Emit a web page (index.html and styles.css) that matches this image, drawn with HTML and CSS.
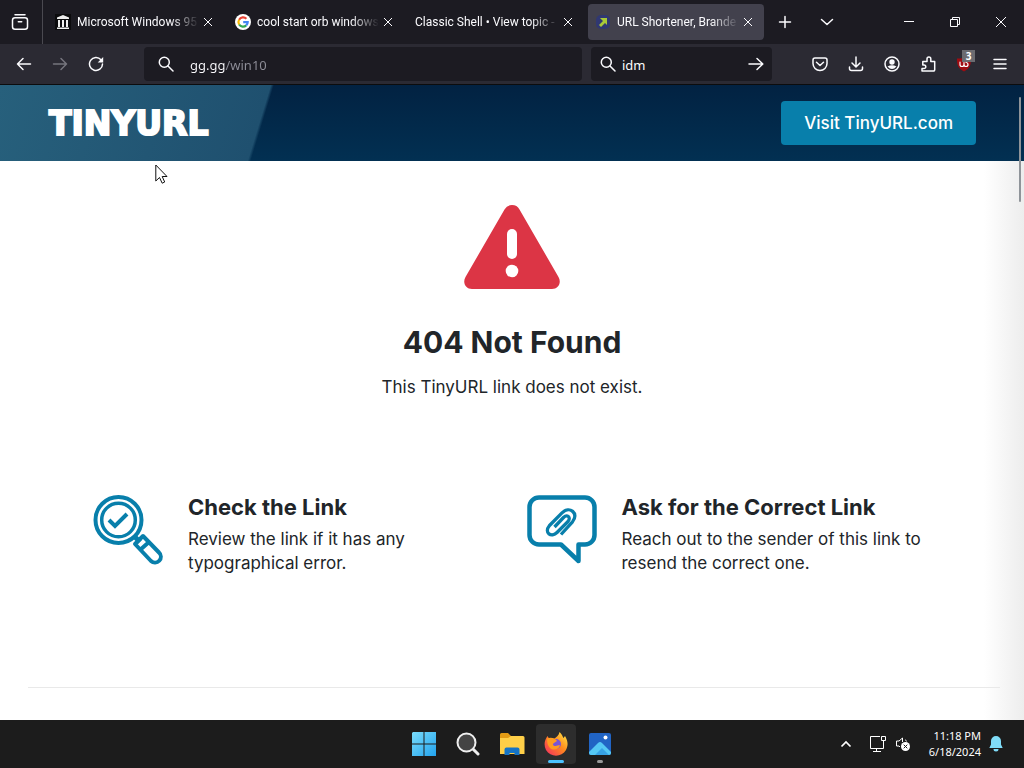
FILE: index.html
```html
<!DOCTYPE html>
<html lang="en">
<head>
<meta charset="utf-8">
<meta name="viewport" content="width=device-width, initial-scale=1">
<title>URL Shortener, Branded Short Links</title>
<link rel="stylesheet" href="styles.css">
</head>
<body>
<div class="desktop">
  <header class="browser">
    <div class="tab-strip">
      <button class="view-button" type="button" aria-label="Firefox View">
        <svg width="18" height="18" viewBox="0 0 18 18" fill="none" stroke="#fbfbfe" stroke-width="1.5" stroke-linecap="round"><path d="M4 1.8h10"/><rect x="1.5" y="4.8" width="15" height="11.5" rx="2.5"/><path d="M7.3 8.8h3.4"/></svg>
      </button>
      <nav class="tabs" aria-label="Tabs">
        <div class="tab">
          <a class="tab-link" href="#">
            <svg width="16" height="16" viewBox="0 0 16 16"><path fill="#0b0b0d" d="M0 0h16v16H0z"/><path fill="#eee" d="M2 3.5 8 1l6 2.500V5H2zM3 6h2v7H3zM7 6h2v7H7zM11 6h2v7h-2zM2 13.500h12V15H2z"/></svg>
            <span class="tab-title">Microsoft Windows 95</span>
          </a>
          <button class="close" type="button" aria-label="Close tab"><svg width="10" height="10" viewBox="0 0 10 10"><path d="m1 1 8 8M9 1 1 9"/></svg></button>
        </div>
        <div class="tab">
          <a class="tab-link" href="#">
            <svg width="16" height="16" viewBox="0 0 16 16"><circle cx="8" cy="8" r="8" fill="#fff"/><g fill="none" stroke-width="2.200"><path stroke="#ea4335" d="M4.100 5.700A4.700 4.700 0 0 1 11.400 4.700"/><path stroke="#fbbc05" d="M4.100 10.500a4.700 4.700 0 0 1 0-4.800"/><path stroke="#34a853" d="M11.200 11.400a4.700 4.700 0 0 1-7.100-.9"/><path stroke="#4285f4" d="M8.200 8.100h4.500a4.700 4.700 0 0 1-1.500 3.300"/></g></svg>
            <span class="tab-title">cool start orb windows</span>
          </a>
          <button class="close" type="button" aria-label="Close tab"><svg width="10" height="10" viewBox="0 0 10 10"><path d="m1 1 8 8M9 1 1 9"/></svg></button>
        </div>
        <div class="tab">
          <a class="tab-link" href="#"><span class="tab-title">Classic Shell • View topic -</span></a>
          <button class="close" type="button" aria-label="Close tab"><svg width="10" height="10" viewBox="0 0 10 10"><path d="m1 1 8 8M9 1 1 9"/></svg></button>
        </div>
        <div class="tab tab-active">
          <a class="tab-link" href="#" aria-current="page">
            <svg width="16" height="16" viewBox="0 0 16 16"><rect x="1" y="1" width="14" height="14" rx="5" fill="#303872"/><path fill="#a9c938" d="M5 4h7v7l-2-2-4 4-2-2 4-4z"/></svg>
            <span class="tab-title">URL Shortener, Brande</span>
          </a>
          <button class="close" type="button" aria-label="Close tab"><svg width="10" height="10" viewBox="0 0 10 10"><path d="m1 1 8 8M9 1 1 9"/></svg></button>
        </div>
      </nav>
      <button class="tool" type="button" aria-label="New tab"><svg width="14" height="14" viewBox="0 0 14 14"><path d="M7 1.500v11M1.500 7h11"/></svg></button>
      <button class="tool" type="button" aria-label="List all tabs"><svg width="14" height="14" viewBox="0 0 14 14"><path d="m1.500 4.500 5.500 5 5.500-5"/></svg></button>
      <div class="window-controls">
        <button type="button" aria-label="Minimize"><svg width="12" height="12" viewBox="0 0 12 12"><path d="M1 5.500h10"/></svg></button>
        <button type="button" aria-label="Restore"><svg width="12" height="12" viewBox="0 0 12 12"><path d="M1.500 3.500h7v7h-7zM3.500 3.500v-2h7v7h-2"/></svg></button>
        <button type="button" aria-label="Close"><svg width="12" height="12" viewBox="0 0 12 12"><path d="m1 1 10 10M11 1 1 11"/></svg></button>
      </div>
    </div>
    <div class="toolbar">
      <div class="nav-tools">
        <button class="tool" type="button" aria-label="Back"><svg width="16" height="16" viewBox="0 0 16 16"><path d="M14.500 8h-13M7 2.500 1.500 8 7 13.500"/></svg></button>
        <button class="tool" type="button" aria-label="Forward" disabled><svg width="16" height="16" viewBox="0 0 16 16"><path d="M1.500 8h13M9 2.500 14.500 8 9 13.500"/></svg></button>
        <button class="tool" type="button" aria-label="Reload"><svg width="16" height="16" viewBox="0 0 16 16"><path d="M13 3.800A6.500 6.500 0 1 0 14.500 8"/><path fill="currentColor" stroke="none" d="M15.200 1v5.500H9.700z"/></svg></button>
      </div>
      <label class="field address">
        <svg width="16" height="16" viewBox="0 0 16 16"><circle cx="6.300" cy="6.300" r="5"/><path d="m10 10 5 5"/></svg>
        <input class="address-input" type="text" value="gg.gg/win10" aria-label="Address">
      </label>
      <div class="field search">
        <svg width="16" height="16" viewBox="0 0 16 16"><circle cx="6.300" cy="6.300" r="5"/><path d="m10 10 5 5"/></svg>
        <input type="text" value="idm" aria-label="Search">
        <button class="go" type="button" aria-label="Go"><svg width="16" height="16" viewBox="0 0 16 16"><path d="M1 8h13.500M9 2.500 14.800 8 9 13.500"/></svg></button>
      </div>
      <div class="extras">
        <button class="tool" type="button" aria-label="Pocket"><svg width="16" height="16" viewBox="0 0 16 16"><path d="M3 2h10a2 2 0 0 1 2 2v3.500a7 7 0 0 1-14 0V4a2 2 0 0 1 2-2zM4.500 6.200 8 9.500l3.500-3.300"/></svg></button>
        <button class="tool" type="button" aria-label="Downloads"><svg width="16" height="16" viewBox="0 0 16 16"><path d="M8 1v9.500M4 7l4 4 4-4M1.500 11v1.500A2 2 0 0 0 3.500 14.500h9a2 2 0 0 0 2-2V11"/></svg></button>
        <button class="tool" type="button" aria-label="Account"><svg width="16" height="16" viewBox="0 0 16 16"><circle cx="8" cy="8" r="7"/><circle cx="8" cy="6" r="2.700" fill="currentColor" stroke="none"/><path fill="currentColor" stroke="none" d="M3.500 10.500Q8 8 12.500 10.500 8 15.500 3.500 10.500z"/></svg></button>
        <button class="tool" type="button" aria-label="Extensions"><svg width="16" height="16" viewBox="0 0 16 16"><path d="M2 15h11.500a1.200 1.200 0 0 0 1.200-1.200V5.500h-3.900V3a1.900 1.900 0 0 0-3.800 0v2.500H2.800V9H4a1.800 1.800 0 0 1 0 3.600H2z"/></svg></button>
        <button class="tool" type="button" aria-label="uBlock Origin, 3 blocked"><svg width="16" height="16" viewBox="0 0 16 16"><path fill="#a00c12" stroke="none" d="M8 1c3 2 5 1.500 7 1.500 0 7-1 9.500-7 13C2 12 1 9.500 1 2.500 4 2.500 5 3 8 1z"/><path stroke="#fff" stroke-width="1.200" d="M4 6v2.500a2 2 0 0 0 4 0V6.500v2a2 2 0 0 0 4 0 2 2 0 0 0-2-2"/></svg><span class="badge">3</span></button>
        <button class="tool" type="button" aria-label="Menu"><svg width="16" height="16" viewBox="0 0 16 16"><path d="M2 3.500h12M2 8h12M2 12.500h12"/></svg></button>
      </div>
    </div>
  </header>

  <div class="page">
    <header class="site-header">
      <a class="brand" href="#">TINYURL</a>
      <a class="visit" href="#">Visit TinyURL.com</a>
    </header>
    <main class="content">
      <section class="notice">
        <svg width="96" height="84" viewBox="0 0 96 84"><path fill="#dc3545" d="M40.500 4.500a8.600 8.600 0 0 1 15 0l39 67.500c3.300 5.700-.2 12-6.500 12H8c-6.300 0-9.800-6.300-6.500-12z"/><path stroke="#fff" stroke-width="10" stroke-linecap="round" d="M48 29v20"/><circle cx="48" cy="66" r="6.300" fill="#fff"/></svg>
        <h1>404 Not Found</h1>
        <p>This TinyURL link does not exist.</p>
      </section>
      <section class="tips">
        <article class="tip">
          <svg width="70" height="70" viewBox="0 0 70 70" fill="none" stroke="#087fab" stroke-width="4"><circle cx="25.500" cy="25" r="23"/><circle cx="25.500" cy="25" r="16.800" stroke-width="3.500"/><path d="m16 25 6 6 12-12"/><path stroke-width="5" d="m41 41 6 6"/><path stroke-linejoin="round" d="m42 49 8-8 16 16.500a5.500 5.500 0 0 1-8 8.500zM47 55l9-8"/></svg>
          <div><h2>Check the Link</h2><p>Review the link if it has any typographical error.</p></div>
        </article>
        <article class="tip">
          <svg width="70" height="70" viewBox="0 0 70 70" fill="none" stroke="#087fab" stroke-width="4.500" stroke-linejoin="round"><path d="M12 2.500h46a9.500 9.500 0 0 1 9.500 9.500v28a9.500 9.500 0 0 1-9.500 9.500h-6.500V66L34 49.500H12A9.500 9.500 0 0 1 2.500 40V12A9.500 9.500 0 0 1 12 2.500z"/><path stroke-width="3.300" d="m34 39.500 11.500-12.700c7-8.300-3-16.500-10.500-9L22.500 30.500c-6 7.500 2 12.500 7.500 7L41 26.500c3.500-4.500-1-7.500-4.500-4L27.500 32"/></svg>
          <div><h2>Ask for the Correct Link</h2><p>Reach out to the sender of this link to resend the correct one.</p></div>
        </article>
      </section>
      <hr class="divider">
    </main>
    <div class="scroll-thumb"></div>
    <svg class="pointer" width="13" height="20" viewBox="0 0 13 20"><path fill="#fff" stroke="#111" d="M.8 1v16l3.700-3.500 2.700 5.700 2.500-1.200L7.200 12.500H12z"/></svg>
  </div>

  <footer class="taskbar">
    <div class="apps">
      <button type="button" aria-label="Start"><svg width="24" height="24" viewBox="0 0 24 24"><defs><linearGradient id="win" x2="1" y2="1"><stop stop-color="#79dcfb"/><stop offset="1" stop-color="#22a3ee"/></linearGradient></defs><path fill="url(#win)" d="M1 0h10.500v11.500H0V1zM12.500 0H24v11.500H12.500zM0 12.500h11.500V24H0zM12.500 12.500H24V24H12.500z"/></svg></button>
      <button type="button" aria-label="Search"><svg width="24" height="24" viewBox="0 0 24 24"><path stroke="#eee" stroke-width="3" stroke-linecap="round" d="m17 17 5 5"/><circle cx="10.500" cy="10.500" r="9" fill="#444" stroke="#eee" stroke-width="2"/></svg></button>
      <button type="button" aria-label="File Explorer"><svg width="26" height="24" viewBox="0 0 26 24"><path fill="#e39b14" d="M1 2.500A1.500 1.500 0 0 1 2.500 1H9l3 3v5H1z"/><path fill="#ffcf48" d="M1 6h8l3-2h12a1.500 1.500 0 0 1 1.500 1.500V22H1z"/><path fill="#1674c5" d="M5.500 23v-5.500a2 2 0 0 1 2-2h11a2 2 0 0 1 2 2V23h-5v-2h-5v2z"/></svg></button>
      <button class="app-active" type="button" aria-label="Firefox"><svg width="24" height="24" viewBox="0 0 24 24"><defs><linearGradient id="fox" x1="1" x2="0" y2="1"><stop stop-color="#fff04a"/><stop offset=".45" stop-color="#ff8a1d"/><stop offset="1" stop-color="#f52667"/></linearGradient></defs><path fill="url(#fox)" d="M15.500 0c3 3 3 4.500 4 6l1.500-2c3.500 6 3 10 1 14-4.500 7.500-15.500 7.500-20 0C-.5 13 .5 8 3.500 4l1.500 2.500c1.800-.8 3.500-.5 5 .3C12.500 5 15 3.500 15.500 0z"/><circle cx="12" cy="12" r="5" fill="#7955d5"/><path fill="#ff9b20" d="M3 6.500c5-2 8.500.5 10 2.500l-3 2c-2 1-1 3 1.500 3 2 0 3-1 4.500-.5-1 4-7 5.500-10 2.500-2.500-2.500-3-6-3-9.500z"/></svg><span class="indicator"></span></button>
      <button type="button" aria-label="Photos"><svg width="24" height="24" viewBox="0 0 24 24"><rect x="1" y="1" width="22" height="22" rx="2" fill="#2164c4"/><path fill="#55c8f4" d="M1 20 10 11q2-2 4 0l9 9v1a2 2 0 0 1-2 2H3a2 2 0 0 1-2-2z"/><path fill="#37a2e4" d="m7 23 7-7 7 7z"/><circle cx="17.500" cy="5.500" r="2" fill="#fff"/></svg><span class="indicator indicator-small"></span></button>
    </div>
    <div class="tray">
      <button type="button" aria-label="Show hidden icons"><svg width="12" height="12" viewBox="0 0 12 12"><path stroke-width="1.700" d="m1.500 8.500 4.500-4.500 4.500 4.500"/></svg></button>
      <button class="status" type="button" aria-label="Network and sound">
        <svg width="18" height="18" viewBox="0 0 18 18"><path d="M11 1.500H1.500v12h13V10M7.500 13.500v3M4 16.500h8M12.500 1.500h4v4h-4zM14.500 5.500V10"/></svg>
        <svg width="16" height="16" viewBox="0 0 16 16"><path d="M7.500 6V2L4 5H1.500v5H4l1 1M10 3.500c1 .8 1.400 1.500 1.500 2"/><circle cx="10.500" cy="10.500" r="4.500" fill="#fff" stroke="none"/><path stroke="#1c1c1c" d="m8.700 8.700 3.600 3.600M12.300 8.700l-3.600 3.600"/></svg>
      </button>
      <time class="clock" datetime="2024-06-18T23:18">11:18 PM<br>6/18/2024</time>
      <button type="button" aria-label="Notifications"><svg width="16" height="16" viewBox="0 0 16 16"><path fill="#80dcf8" stroke="none" d="M8 0a5 5 0 0 1 5 5v3.500l1.700 3.500H1.300L3 8.500V5a5 5 0 0 1 5-5zM5.500 13h5a2.500 2.500 0 0 1-5 0z"/></svg></button>
    </div>
  </footer>
</div>
</body>
</html>
```

FILE: styles.css
```css
* { box-sizing: border-box; }

body { margin: 0; font-family: "Noto Sans", sans-serif; }

button { margin: 0; padding: 0; border: 0; background: none; color: inherit; font: inherit; }

button, .tab-link, .field { display: flex; align-items: center; }

button { justify-content: center; }

svg { display: block; flex: none; }

h1, h2, p { margin: 0; }

.desktop { display: flex; flex-direction: column; min-height: 100vh; }

/* Browser chrome */

.browser { color: #fbfbfe; background: #2b2a33; border-bottom: 1px solid #0c0c0d; }

.tab-strip { display: flex; height: 44px; background: #1c1b22; }

.view-button { width: 43px; padding-right: 3px; border-right: 1px solid #4a4950; }

.tabs { display: flex; flex: 0 1 716px; gap: 4px; margin-left: 5px; padding: 4px 0; min-width: 0; }

.tab { display: flex; flex: 1 1 0; align-items: center; min-width: 0; padding: 0 11px 0 7px; border-radius: 4px; }

.tab-active { background: #42414d; }

.tab-link { flex: 1; gap: 6px; min-width: 0; color: inherit; font-family: Roboto, sans-serif; font-size: 12px; text-decoration: none; }

.tab-title { flex: 1; overflow: hidden; white-space: nowrap; mask-image: linear-gradient(to left, transparent, #000 28px); }

.close { width: 10px; height: 24px; margin-left: 4px; }

.close svg, .tool svg, .field svg, .window-controls svg, .tray svg { fill: none; stroke: currentColor; }

.tool svg, .field svg { stroke-width: 1.5; stroke-linecap: round; stroke-linejoin: round; }

.tool { position: relative; width: 36px; height: 40px; }

.tool:disabled { color: #76757e; }

.tab-strip .tool { width: 42px; height: 44px; }

.window-controls { display: flex; margin-left: auto; }

.window-controls button { width: 46px; }

.toolbar { display: flex; align-items: center; height: 40px; padding: 0 6px; }

.nav-tools, .extras { display: flex; }

.field { height: 34px; border-radius: 4px; background: #1c1b22; }

.field input { flex: 1; min-width: 0; height: 30px; padding: 2px 0 0; border: 0; outline: 0; background: none; color: #fbfbfe; font: 13px "Noto Sans", sans-serif; }

.address { flex: 1; gap: 16px; margin-left: 30px; padding-left: 14px; }

.field .address-input { color: transparent; background: linear-gradient(to right, #fbfbfe 35px, #8f8f99 35px); background-clip: text; -webkit-background-clip: text; }

.search { width: 181px; gap: 6px; margin: 0 30px 0 9px; padding: 0 8px 0 9px; }

.badge { position: absolute; top: 6px; right: 7px; width: 13px; height: 12px; background: #6b6b70; color: #fff; font-size: 10px; font-weight: 700; line-height: 12px; }

/* Web page */

.page { position: relative; display: flex; flex: 1; flex-direction: column; color: #212529; background: linear-gradient(to left, #ededed, #fff 40px); font-family: Inter, sans-serif; }

.site-header { display: flex; align-items: center; justify-content: space-between; height: 76px; padding: 0 48px; background: linear-gradient(107deg, #27607c, #1f506f 259px, transparent 262px), linear-gradient(#022242, #023052); }

.brand { padding-left: 1px; color: #fff; font-family: "DejaVu Sans", sans-serif; font-size: 33px; font-weight: 700; text-decoration: none; -webkit-text-stroke: 2px #fff; }

.visit { padding: 10px 23px; border-radius: 4px; background: #087fab; color: #fff; font-size: 17px; font-weight: 500; line-height: 24px; text-decoration: none; }

.content { display: flex; flex: 1; flex-direction: column; padding: 44px 24px 32px 28px; }

.notice { display: flex; flex-direction: column; align-items: center; padding-right: 4px; text-align: center; }

h1 { margin-top: 35px; font-size: 30px; font-weight: 700; line-height: 36px; }

p { font-size: 17px; line-height: 24px; }

.notice p { margin-top: 15px; }

.tips { display: grid; grid-template-columns: 1fr 1fr; gap: 24px; padding: 96px 64px 0 65px; }

.tip { display: flex; gap: 25px; }

.tip p { max-width: 310px; }

h2 { margin-bottom: 8px; font-size: 22px; font-weight: 700; line-height: 24px; }

.divider { width: 100%; height: 1px; margin: auto 0 0; border: 0; background: #e9e9e9; }

.scroll-thumb { position: absolute; top: 12px; right: 3px; width: 2px; height: 105px; border-radius: 1px; background: #8f9499; }

.pointer { position: absolute; top: 79px; left: 155px; }

/* Taskbar */

.taskbar { display: grid; grid-template-columns: 1fr auto 1fr; align-items: center; height: 48px; background: #1c1c1c; color: #fff; }

.apps { display: flex; grid-column: 2; gap: 4px; }

.apps button { position: relative; width: 40px; height: 40px; border-radius: 4px; }

.apps .app-active { background: #2d2d2d; }

.indicator { position: absolute; bottom: 1px; left: 12px; width: 16px; height: 3px; border-radius: 2px; background: #4cc2ff; }

.indicator-small { left: 17px; width: 6px; background: #9a9a9a; }

.tray { display: flex; align-items: center; justify-content: flex-end; padding-right: 20px; }

.tray .status { gap: 8px; margin: 0 18px 0 17px; }

.clock { margin-right: 7px; font-size: 11px; line-height: 16px; text-align: right; }
```
